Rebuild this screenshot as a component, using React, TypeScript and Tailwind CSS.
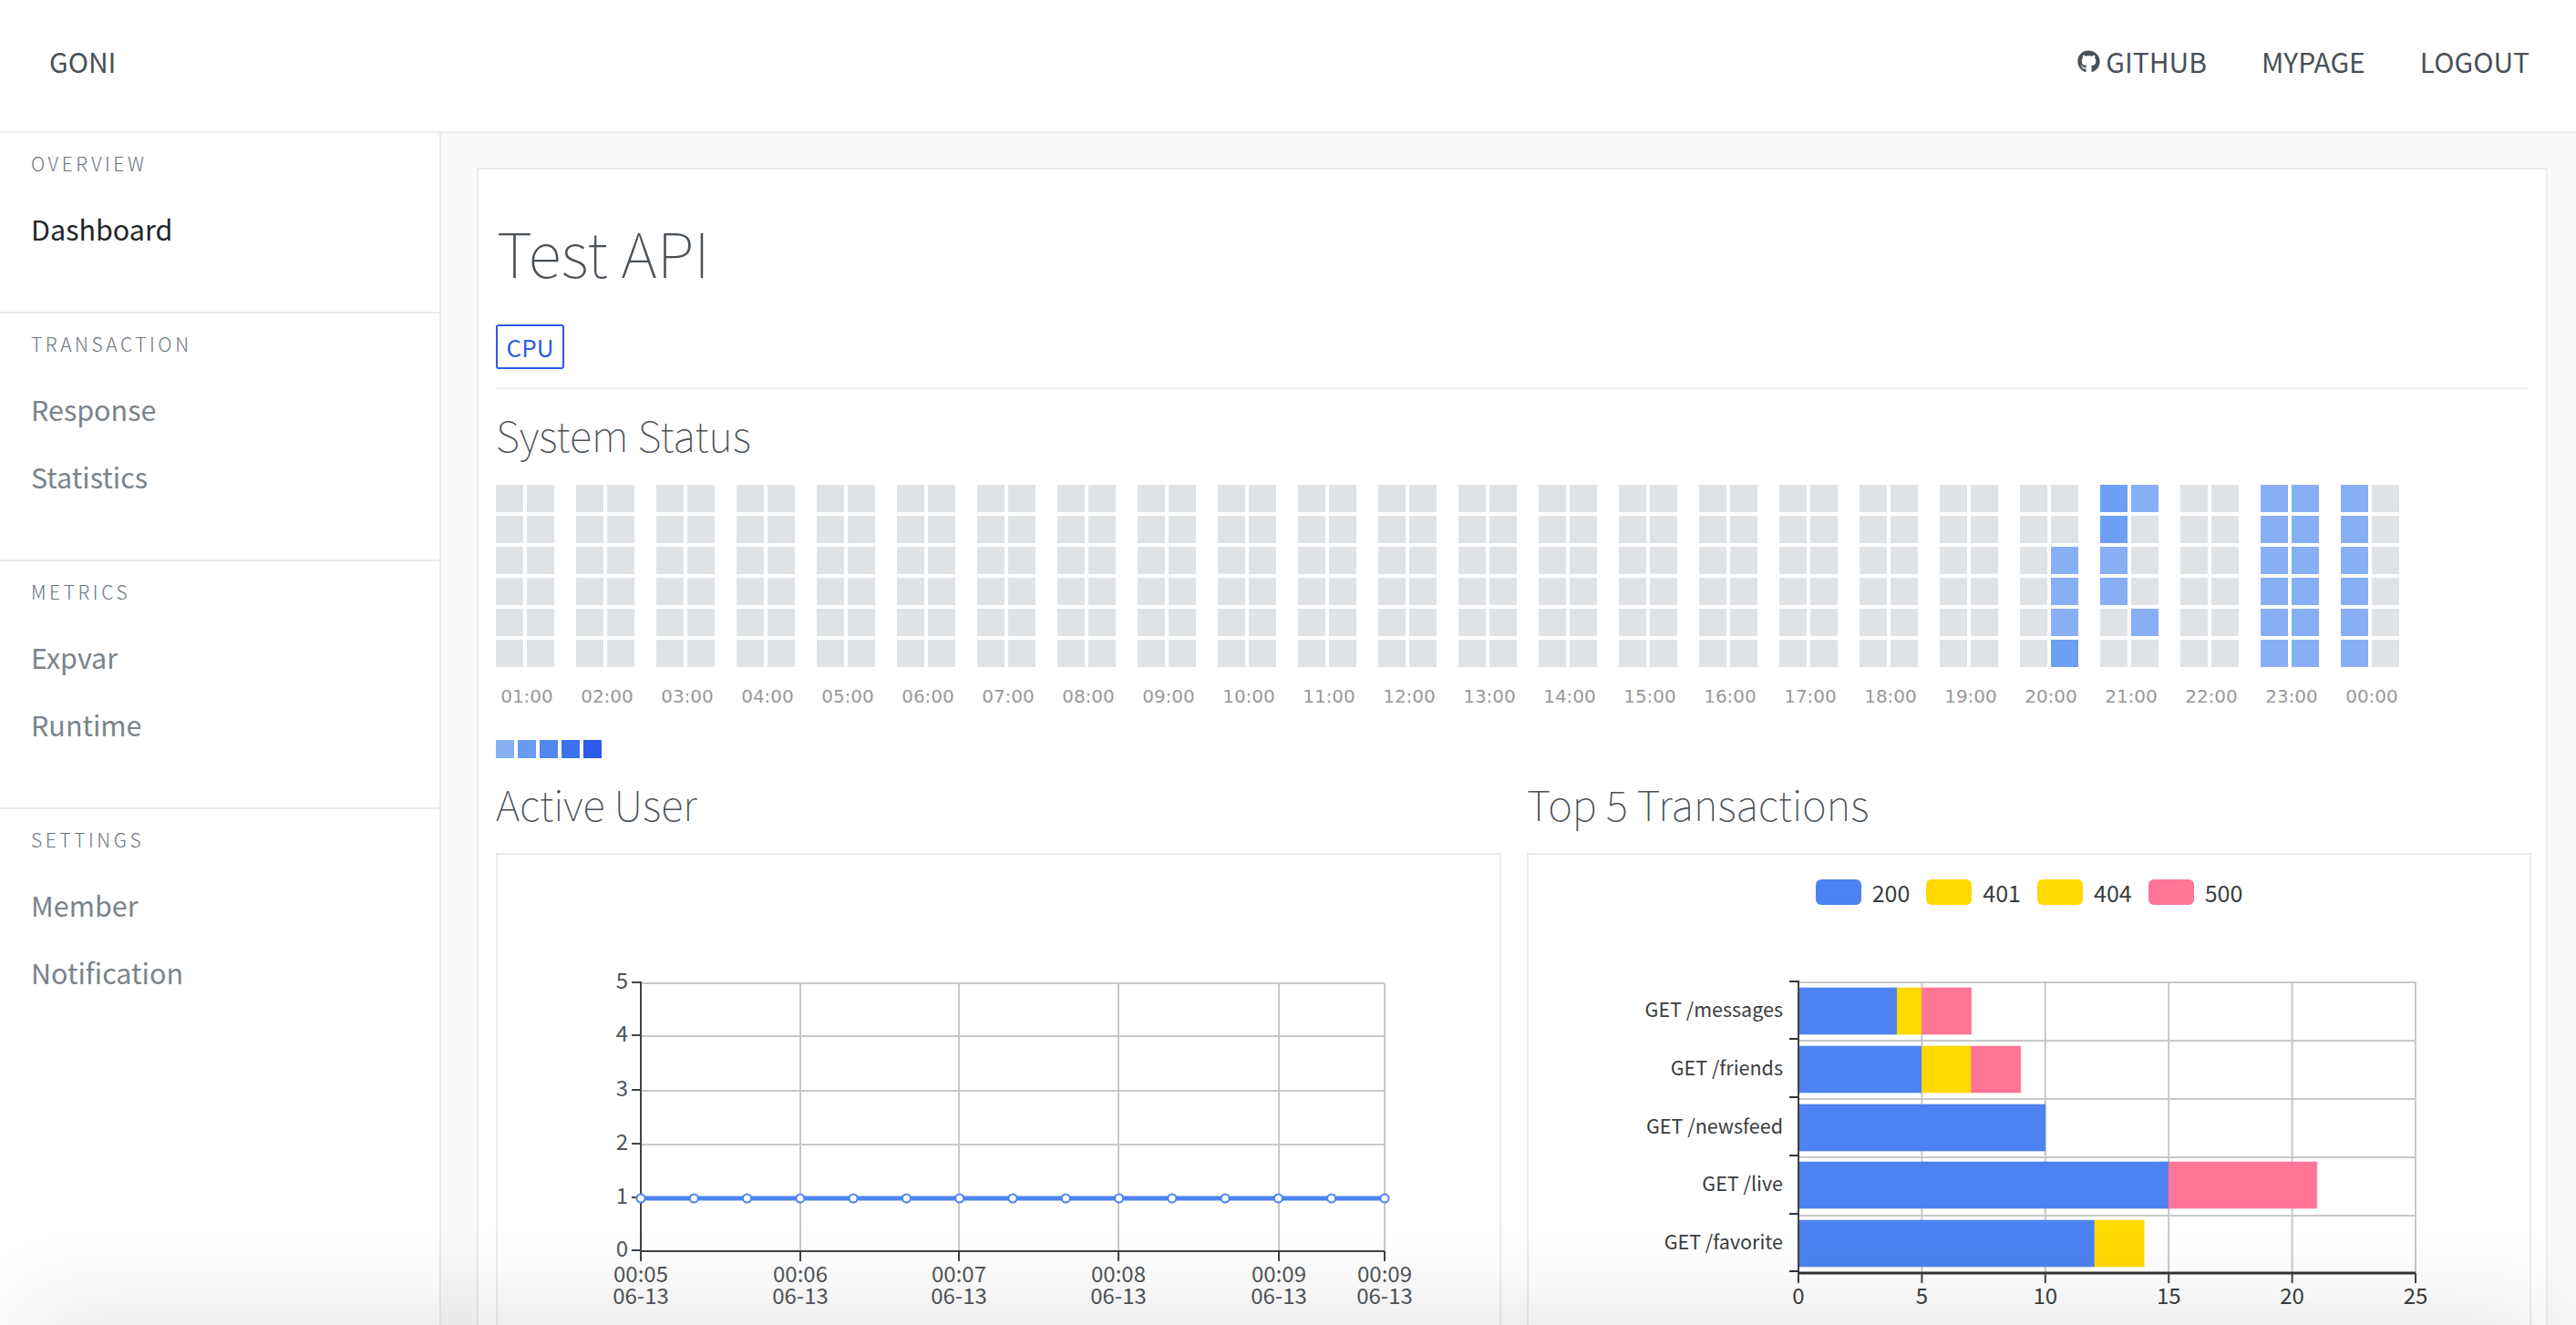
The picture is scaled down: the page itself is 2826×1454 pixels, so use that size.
import { FaGithub } from "react-icons/fa";

const NAV = [
  { title: "OVERVIEW", items: ["Dashboard"] },
  { title: "TRANSACTION", items: ["Response", "Statistics"] },
  { title: "METRICS", items: ["Expvar", "Runtime"] },
  { title: "SETTINGS", items: ["Member", "Notification"] },
];

const HOURS = [
  "01:00", "02:00", "03:00", "04:00", "05:00", "06:00", "07:00", "08:00",
  "09:00", "10:00", "11:00", "12:00", "13:00", "14:00", "15:00", "16:00",
  "17:00", "18:00", "19:00", "20:00", "21:00", "22:00", "23:00", "00:00",
];

// two characters per row: left and right cell. . = idle, l = light, m = medium
const BUSY: Record<string, string[]> = {
  "20:00": ["..", "..", ".l", ".l", ".l", ".m"],
  "21:00": ["ml", "m.", "l.", "l.", ".l", ".."],
  "23:00": ["ll", "ll", "ll", "ll", "ll", "ll"],
  "00:00": ["l.", "l.", "l.", "l.", "l.", "l."],
};
const IDLE = ["..", "..", "..", "..", "..", ".."];
const CELL: Record<string, string> = { ".": "bg-[#e0e3e6]", l: "bg-[#88aff4]", m: "bg-[#6d9ff3]" };
const SCALE = ["bg-[#88aff4]", "bg-[#6a9bf2]", "bg-[#5287f0]", "bg-[#3c71ee]", "bg-[#2b5ae8]"];

const BLUE = "#4d82f0";
const YELLOW = "#ffd900";
const PINK = "#ff7596";
const GRID = "#c8c8c8";
const AXIS = "#3f4347";
const CHART_FONT = "'Noto Sans CJK KR','Noto Sans',sans-serif";

function Heatmap() {
  return (
    <div className="flex">
      {HOURS.map((hour) => (
        <div key={hour} className="w-[88px] shrink-0">
          <div className="grid w-[64px] grid-cols-2 gap-[4px]">
            {(BUSY[hour] ?? IDLE).flatMap((row, r) =>
              row.split("").map((c, i) => <div key={`${r}-${i}`} className={`h-[30px] ${CELL[c]}`} />),
            )}
          </div>
          <div className="mt-[20px] w-[68px] text-center font-['DejaVu_Sans',sans-serif] text-[20px] leading-[24px] text-[#999]">
            {hour}
          </div>
        </div>
      ))}
    </div>
  );
}

function LineChart() {
  const left = 703;
  const right = 1519;
  const ys = [1373, 1315, 1256, 1197, 1137, 1079];
  const xs = [703, 878, 1052, 1227, 1403, 1519];
  const times = ["00:05", "00:06", "00:07", "00:08", "00:09", "00:09"];
  const y1 = 1315;
  const points = Array.from({ length: 15 }, (_, i) => left + (i * (right - left)) / 14);
  // svg origin is the panel's top left corner (546, 938)
  return (
    <svg width="1100" height="520" viewBox="546 938 1100 520" className="block" fontFamily={CHART_FONT} fontSize="24" fill="#50555a">
      {ys.slice(1).map((y) => <line key={y} x1={left} x2={right} y1={y} y2={y} stroke={GRID} strokeWidth="2" />)}
      {xs.slice(1).map((x) => <line key={x} x1={x} x2={x} y1="1079" y2="1373" stroke={GRID} strokeWidth="2" />)}
      <line x1={left} x2={left} y1="1077" y2="1373" stroke={AXIS} strokeWidth="2" />
      <line x1={left} x2={right} y1="1373" y2="1373" stroke={AXIS} strokeWidth="2" />
      {ys.map((y, i) => (
        <g key={y}>
          <line x1={left - 10} x2={left} y1={y - 1} y2={y - 1} stroke={AXIS} strokeWidth="2" />
          <text x={left - 14} y={y + 6} textAnchor="end">{i}</text>
        </g>
      ))}
      {xs.map((x, i) => (
        <g key={x}>
          <line x1={x} x2={x} y1="1373" y2="1384" stroke={AXIS} strokeWidth="2" />
          <text x={x} y="1407" textAnchor="middle">{times[i]}</text>
          <text x={x} y="1431" textAnchor="middle">06-13</text>
        </g>
      ))}
      <line x1={left} x2={right} y1={y1} y2={y1} stroke={BLUE} strokeWidth="5" />
      {points.map((x) => <circle key={x} cx={x} cy={y1} r="4.5" fill="#fff" stroke={BLUE} strokeWidth="2" />)}
    </svg>
  );
}

const ROWS = [
  { label: "GET /messages", top: 1084, parts: [[4, BLUE], [1, YELLOW], [2, PINK]] },
  { label: "GET /friends", top: 1148, parts: [[5, BLUE], [2, YELLOW], [2, PINK]] },
  { label: "GET /newsfeed", top: 1212, parts: [[10, BLUE]] },
  { label: "GET /live", top: 1275, parts: [[15, BLUE], [6, PINK]] },
  { label: "GET /favorite", top: 1339, parts: [[12, BLUE], [2, YELLOW]] },
] as const;

function BarChart() {
  const left = 1973;
  const unit = 27.08;
  const lines = [1078, 1142, 1206, 1270, 1334];
  const ticks = [0, 5, 10, 15, 20, 25];
  return (
    <svg width="1100" height="420" viewBox="1677 1038 1100 420" className="block" fontFamily={CHART_FONT} fontSize="21.5" fill="#3a3d40">
      {lines.map((y) => <line key={y} x1={left} x2="2650" y1={y} y2={y} stroke={GRID} strokeWidth="2" />)}
      {ticks.slice(1).map((t) => <line key={t} x1={left + t * unit} x2={left + t * unit} y1="1078" y2="1397" stroke={GRID} strokeWidth="2" />)}
      {ROWS.map((row) => {
        let x = left;
        return (
          <g key={row.label}>
            <text x="1956" y={row.top + 32} textAnchor="end">{row.label}</text>
            {row.parts.map(([n, color]) => {
              const rect = <rect key={x} x={x} y={row.top} width={n * unit} height="51" fill={color} stroke={color} strokeOpacity="0.6" strokeWidth="1" />;
              x += n * unit;
              return rect;
            })}
          </g>
        );
      })}
      <line x1={left} x2={left} y1="1076" y2="1397" stroke={AXIS} strokeWidth="2" />
      <line x1={left} x2="2650" y1="1397" y2="1397" stroke="#333" strokeWidth="3" />
      {[1077, 1140, 1204, 1268, 1332, 1395].map((y) => (
        <line key={y} x1={left - 10} x2={left} y1={y} y2={y} stroke="#333" strokeWidth="2" />
      ))}
      {ticks.map((t) => (
        <g key={t}>
          <line x1={left + t * unit} x2={left + t * unit} y1="1397" y2="1408" stroke={AXIS} strokeWidth="2" />
          <text x={left + t * unit} y="1431" textAnchor="middle" fontSize="24">{t}</text>
        </g>
      ))}
    </svg>
  );
}

function Legend() {
  const entries = [
    { code: "200", cls: "bg-[#4d82f0]" },
    { code: "401", cls: "bg-[#ffd900]" },
    { code: "404", cls: "bg-[#ffd900]" },
    { code: "500", cls: "bg-[#ff7596]" },
  ];
  return (
    <div className="flex h-[100px] items-start justify-center gap-[18px] pt-[27px] text-[25px] leading-[28px] text-[#3a3d40]">
      {entries.map((e) => (
        <div key={e.code} className="flex items-center gap-[12px]">
          <span className={`h-[28px] w-[50px] rounded-[6px] ${e.cls}`} />
          {e.code}
        </div>
      ))}
    </div>
  );
}

export default function App() {
  return (
    <div className="relative flex h-[1454px] flex-col overflow-hidden bg-white font-['Noto_Sans_CJK_KR','Noto_Sans',sans-serif] text-[#495057]">
      <header className="flex h-[146px] shrink-0 items-center justify-between border-b-2 border-[#e9ecef] pr-[51px] pb-[10px] pl-[54px] text-[30px] leading-none">
        <span>GONI</span>
        <nav className="flex items-center gap-[60px]">
          <a className="flex items-center gap-[6px]"><FaGithub className="size-[25px]" />GITHUB</a>
          <a>MYPAGE</a>
          <a>LOGOUT</a>
        </nav>
      </header>
      <div className="flex min-h-0 flex-1">
        <aside className="w-[484px] shrink-0 border-r-2 border-[#e9ecef]">
          {NAV.map((section) => (
            <div key={section.title} className="border-b-2 border-[#e9ecef] pb-[53px] last:border-b-0">
              <div className="flex h-[69px] items-start pt-[20px] pl-[34px] text-[21px] leading-[26px] font-light tracking-[0.17em] text-[#6c757d]">
                {section.title}
              </div>
              {section.items.map((item) => (
                <div key={item} className={`flex h-[74px] items-center pl-[34px] text-[30.5px] ${item === "Dashboard" ? "text-[#212529]" : "text-[#7b838a]"}`}>
                  {item}
                </div>
              ))}
            </div>
          ))}
        </aside>
        <main className="min-w-0 flex-1 bg-[#f8f9fa] pt-[38px] pr-[31px] pl-[39px]">
          <div className="border-2 border-[#e9ecef] bg-white px-[19px]">
            <h1 className="pt-[45px] pl-[1px] text-[68px] leading-[90px] font-thin">Test API</h1>
            <div className="mt-[35px] flex h-[71px] items-start border-b-2 border-[#e9ecef]">
              <span className="flex h-[49px] w-[75px] items-center justify-center rounded-[3px] border-2 border-[#2b5ae8] text-[26px] text-[#2b5ae8]">CPU</span>
            </div>
            <h3 className="mt-[21px] h-[57px] text-[45.5px] leading-[56px] font-thin">System Status</h3>
            <div className="mt-[27px]"><Heatmap /></div>
            <div className="mt-[36px] flex gap-[4px]">
              {SCALE.map((c) => <span key={c} className={`size-[20px] ${c}`} />)}
            </div>
            <div className="mt-[20px] grid grid-cols-[1103px_1102px] gap-[28px]">
              <section>
                <h3 className="h-[84px] text-[45.5px] leading-[58px] font-thin">Active User</h3>
                <div className="h-[600px] border-2 border-[#e9ecef]">
                  <LineChart />
                </div>
              </section>
              <section>
                <h3 className="h-[84px] text-[45.5px] leading-[58px] font-thin">Top 5 Transactions</h3>
                <div className="h-[600px] border-2 border-[#e9ecef]">
                  <Legend />
                  <BarChart />
                </div>
              </section>
            </div>
          </div>
        </main>
      </div>
      <div className="pointer-events-none absolute inset-x-[30px] -bottom-[100px] h-[100px] shadow-[0_-20px_100px_rgba(0,0,0,0.1)]" />
    </div>
  );
}
